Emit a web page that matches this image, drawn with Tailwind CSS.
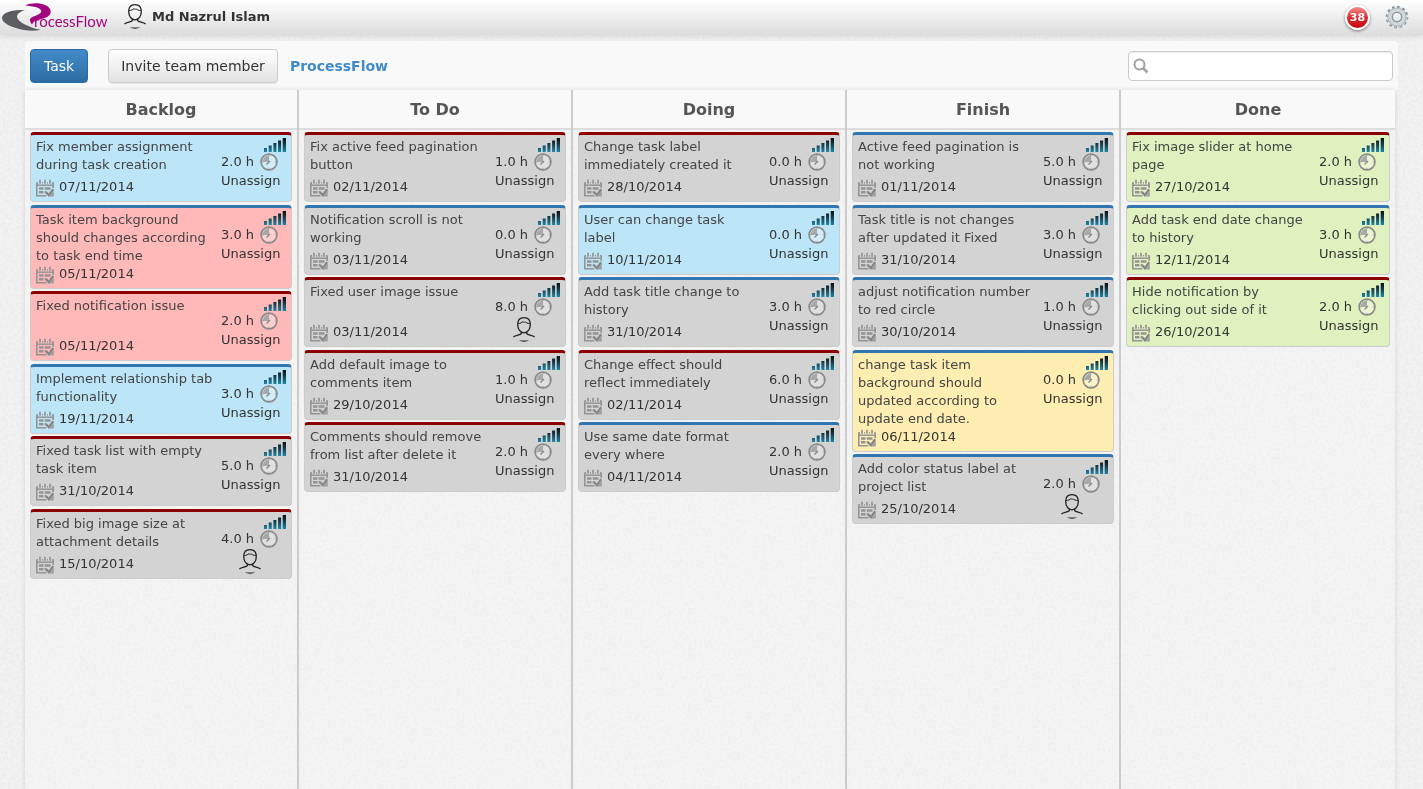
<!DOCTYPE html>
<html lang="en">
<head>
<meta charset="utf-8">
<title>ProcessFlow</title>
<script src="https://cdn.jsdelivr.net/npm/@tailwindcss/browser@4"></script>
</head>
<body class="flex min-h-screen flex-col overflow-x-hidden bg-[#f2f2f2] font-['DejaVu_Sans',sans-serif] text-[13px] leading-[18px] text-[#333]">

<!-- paper texture -->
<svg class="fixed inset-0 -z-10 h-full w-full" aria-hidden="true">
  <filter id="paper" x="0" y="0" width="100%" height="100%">
    <feTurbulence type="fractalNoise" baseFrequency="0.35" numOctaves="2" seed="4"/>
    <feColorMatrix type="matrix" values="0 0 0 0 0.5  0 0 0 0 0.5  0 0 0 0 0.5  0.3 0 0 0 -0.12"/>
  </filter>
  <rect width="100%" height="100%" filter="url(#paper)"/>
</svg>

<svg class="absolute size-0" aria-hidden="true">
  <defs>
    <linearGradient id="barfill" gradientUnits="userSpaceOnUse" x1="0" y1="0" x2="0" y2="14">
      <stop offset="0" stop-color="#0b1216"/><stop offset=".35" stop-color="#12303d"/><stop offset="1" stop-color="#1f86a6"/>
    </linearGradient>
    <symbol id="signal" viewBox="0 0 22 14">
      <path fill="url(#barfill)" d="M0 10h3v4H0zM4.700 7.500h3V14h-3zM9.400 5h3v9h-3zM14.100 2.500h3V14h-3zM18.700 0H22v14h-3.300z"/>
    </symbol>
    <symbol id="clock" viewBox="0 0 18 18">
      <circle cx="9" cy="9" r="7.900" fill="#fff" fill-opacity=".3" stroke="#8a8a8a" stroke-width="1.700"/>
      <path fill="#a8a8a8" d="M9 9H2.500A6.500 6.500 0 0 1 9 2.500z"/>
      <path d="M10 8L6.500 11.500" fill="none" stroke="#858585" stroke-width="1.300"/>
      <path d="M9 2.200v1M9 14.800v1M14.800 9h1M2.200 9h1" stroke="#999" stroke-width="1"/>
    </symbol>
    <symbol id="calendar" viewBox="0 0 18 18">
      <g fill="none" stroke="#949494">
        <path stroke-width="1.600" d="M.8 3.500V16.700H10.500M17.200 3.500V9M.8 3.700H2M16 3.700h1.200M6 3.700h1M11 3.700h1"/>
        <path stroke-width="1.500" d="M0 6.200h18"/>
        <path stroke-width="1.700" d="M4 .8v4M9 .8v4M14 .8v4"/>
      </g>
      <path fill="#949494" d="M3 8.300h4.500v2.400H3zM8.700 8.300h5.800v2.400H8.700zM3 12h4.500v2.500H3zM8.700 12h2v2.500h-2z"/>
      <path fill="none" stroke="#858585" stroke-width="2.200" d="M10.200 13.200l2.700 3 4.300-6"/>
      <path fill="#a0a0a0" d="M17.800 11.500V17.500h-5z"/>
    </symbol>
    <symbol id="person" viewBox="0 0 22 25">
      <g fill="none" stroke="#222" stroke-width="1.300">
        <path d="M4.700 7.500C4.700 3 7.300.7 11 .7s6.300 2.300 6.300 6.800c0 4.600-2.600 8.300-6.300 8.300S4.700 12.100 4.700 7.500z"/>
        <path d="M5 6.500c2.300 0 4-.8 5-2 .5 1 1.200 1.300 2 .2.800 1 2.500 1.800 5 1.800" stroke-width="1"/>
        <path d="M8.300 14.800v1.800c-1 1.500-5.800 1.400-7.900 3.400M13.700 14.800v1.800c1 1.500 5.800 1.400 7.900 3.400"/>
      </g>
      <path fill="#222" d="M6 23.500h10c-2 1.500-8 1.500-10 0z"/>
    </symbol>
  </defs>
</svg>

<header class="flex h-[35px] shrink-0 items-center bg-linear-to-b from-white to-[#dcdcdc] pr-[14px] pb-[2px] shadow-[0_1px_6px_rgba(0,0,0,0.12)]">
  <a href="#" aria-label="ProcessFlow home" class="shrink-0">
    <svg width="111" height="33" viewBox="0 0 111 33">
      <path fill="#5c5d60" d="M25 10C14 9.500 2 12 2 18c0 5 9 9.500 22 12 6 1 12 1 17-.3C33 28.500 24 25 19 20.500c-4-4-2-8 6-10.500z"/>
      <path fill="#a3057f" d="M25 5.500C30 3 39 2.500 45 5c5 2 7 6 5 9.500-3 4-10 4.500-14 6-2 1-3.200 2-4 4C29.500 21 29 19 32 17.300c4-2 9.500-3.300 9.300-6.300C41 8 34 6 25 5.500z"/>
      <text x="34" y="27" fill="#a3057f" font-family="Lato, sans-serif" font-size="15">rocessFlow</text>
    </svg>
  </a>
  <svg class="ml-[13px] h-[25px] w-[22px]" aria-hidden="true"><use href="#person"/></svg>
  <span class="ml-[6px] font-bold">Md Nazrul Islam</span>
  <button class="mt-[2px] ml-auto flex size-[25px] items-center justify-center rounded-full border-2 border-white bg-linear-to-b from-[#f48a8f] via-[#dc2a30] to-[#c80008] text-[11px] font-bold text-white shadow-[0_1px_3px_rgba(0,0,0,0.5)]">38</button>
  <button class="ml-[15px]" aria-label="Settings">
    <svg width="24" height="24" viewBox="0 0 24 24" fill="none">
      <circle cx="12" cy="12" r="10" stroke="#82919a" stroke-width="2.600" stroke-dasharray="2.600 2.636"/>
      <circle cx="12" cy="12" r="7" stroke="#9aa6ad" stroke-width="4.800"/>
      <circle cx="12" cy="12" r="7" stroke="#cfd7db" stroke-width="3.600"/>
      <circle cx="12" cy="12" r="4.600" stroke="#8c999f" stroke-width="1.300"/>
      <circle cx="12" cy="12" r="9.700" stroke="#ccd4d8" stroke-width="1.600" stroke-dasharray="1.400 3.836" stroke-dashoffset="-.6"/>
    </svg>
  </button>
</header>

<main class="mt-[6px] flex grow flex-col pl-[25px]">
  <div class="mr-[25px] flex h-[49px] shrink-0 items-center rounded-t bg-[#f9f9f9] px-[5px]">
    <button class="h-[34px] rounded border border-[#2d6ca2] bg-linear-to-b from-[#428bca] to-[#2d6ca2] px-[13px] text-[14px] text-white">Task</button>
    <button class="ml-[20px] h-[34px] rounded border border-[#ccc] bg-linear-to-b from-white to-[#e2e2e2] px-[12px] text-[14px] shadow-[0_1px_1px_rgba(0,0,0,0.08)]">Invite team member</button>
    <a href="#" class="ml-[12px] text-[14px] font-bold text-[#428bca]">ProcessFlow</a>
    <div class="relative ml-auto">
      <input type="search" aria-label="Search tasks" class="block h-[30px] w-[265px] rounded border border-[#ccc] bg-white pr-2 pl-[26px] shadow-[inset_0_1px_1px_rgba(0,0,0,0.08)]">
      <svg class="absolute top-[7px] left-[5px]" width="16" height="16" viewBox="0 0 16 16" fill="none" stroke="#a0a0a0" aria-hidden="true">
        <circle cx="6.500" cy="6.500" r="5" stroke-width="2"/><path d="M10.200 10.200l4.300 4.300" stroke-width="2.600"/>
      </svg>
    </div>
  </div>
  <div id="board" class="mr-[28px] grid grow grid-cols-5 bg-white/20 shadow-[0_0_5px_rgba(0,0,0,0.12)]"></div>
</main>

<template id="column-template">
  <section class="border-r-2 border-[#ccc] last:border-r-0">
    <h2 class="h-[40px] border-b-2 border-[#ddd] bg-[#f9f9f9] pt-[11px] text-center text-[16px] font-bold text-[#555]"></h2>
    <div class="px-[5px] pt-[2px]"></div>
  </section>
</template>

<template id="card-template">
  <article class="flex rounded border border-t-3 border-[#ccc] px-[5px] pt-[3px] pb-[5px] odd:mb-[3px] even:mb-[2px]">
    <div class="w-[178px]">
      <p data-title class="min-h-[40px] whitespace-pre-line text-[#444]"></p>
      <div class="flex h-[18px] items-center gap-[5px]">
        <svg class="mt-[2px] size-[18px]" aria-hidden="true"><use href="#calendar"/></svg>
        <time data-date></time>
      </div>
    </div>
    <div class="-mb-[5px] ml-auto flex w-[65px] flex-col">
      <svg class="h-[14px] w-[22px] self-end" aria-hidden="true"><use href="#signal"/></svg>
      <div class="flex h-[20px] items-center gap-[6px]">
        <span data-hours></span>
        <svg class="size-[18px]" aria-hidden="true"><use href="#clock"/></svg>
      </div>
      <div data-member></div>
    </div>
  </article>
</template>

<script>
  const backgrounds = {
    blue: 'bg-[#bce5f7]', red: 'bg-[#ffb9b9]', gray: 'bg-[#d3d3d3]', yellow: 'bg-[#feeeb2]', green: 'bg-[#dff1be]'
  };
  const priorities = { high: 'border-t-[#8b0000]', normal: 'border-t-[#3276b1]' };
  // title, date, hours, background, priority, has member
  const columns = [
    ['Backlog', [
      ['Fix member assignment during task creation', '07/11/2014', '2.0 h', 'blue', 'high'],
      ['Task item background should changes according to task end time', '05/11/2014', '3.0 h', 'red', 'normal'],
      ['Fixed notification issue', '05/11/2014', '2.0 h', 'red', 'high'],
      ['Implement relationship tab functionality', '19/11/2014', '3.0 h', 'blue', 'normal'],
      ['Fixed task list with empty task item', '31/10/2014', '5.0 h', 'gray', 'high'],
      ['Fixed big image size at attachment details', '15/10/2014', '4.0 h', 'gray', 'high', true]
    ]],
    ['To Do', [
      ['Fix active feed pagination button', '02/11/2014', '1.0 h', 'gray', 'high'],
      ['Notification scroll is not working', '03/11/2014', '0.0 h', 'gray', 'normal'],
      ['Fixed user image issue', '03/11/2014', '8.0 h', 'gray', 'high', true],
      ['Add default image to comments item', '29/10/2014', '1.0 h', 'gray', 'high'],
      ['Comments should remove from list after delete it', '31/10/2014', '2.0 h', 'gray', 'high']
    ]],
    ['Doing', [
      ['Change task label immediately created it', '28/10/2014', '0.0 h', 'gray', 'high'],
      ['User can change task\nlabel', '10/11/2014', '0.0 h', 'blue', 'normal'],
      ['Add task title change to history', '31/10/2014', '3.0 h', 'gray', 'normal'],
      ['Change effect should reflect immediately', '02/11/2014', '6.0 h', 'gray', 'high'],
      ['Use same date format every where', '04/11/2014', '2.0 h', 'gray', 'normal']
    ]],
    ['Finish', [
      ['Active feed pagination is not working', '01/11/2014', '5.0 h', 'gray', 'normal'],
      ['Task title is not changes after updated it Fixed', '31/10/2014', '3.0 h', 'gray', 'normal'],
      ['adjust notification number to red circle', '30/10/2014', '1.0 h', 'gray', 'normal'],
      ['change task item background should updated according to update end date.', '06/11/2014', '0.0 h', 'yellow', 'normal'],
      ['Add color status label at project list', '25/10/2014', '2.0 h', 'gray', 'normal', true]
    ]],
    ['Done', [
      ['Fix image slider at home page', '27/10/2014', '2.0 h', 'green', 'high'],
      ['Add task end date change to history', '12/11/2014', '3.0 h', 'green', 'normal'],
      ['Hide notification by clicking out side of it', '26/10/2014', '2.0 h', 'green', 'high']
    ]]
  ];
  const board = document.getElementById('board');
  for (const [name, cards] of columns) {
    const column = document.getElementById('column-template').content.firstElementChild.cloneNode(true);
    column.querySelector('h2').textContent = name;
    for (const [title, date, hours, background, priority, member] of cards) {
      const card = document.getElementById('card-template').content.firstElementChild.cloneNode(true);
      card.classList.add(backgrounds[background], priorities[priority]);
      card.querySelector('[data-title]').textContent = title;
      card.querySelector('[data-date]').textContent = date;
      card.querySelector('[data-hours]').textContent = hours;
      card.querySelector('[data-member]').innerHTML = member
        ? '<svg class="ml-[18px] h-[25px] w-[22px]" role="img" aria-label="Assigned member"><use href="#person"/></svg>'
        : '<span class="block">Unassign</span>';
      column.lastElementChild.append(card);
    }
    board.append(column);
  }
</script>
</body>
</html>
